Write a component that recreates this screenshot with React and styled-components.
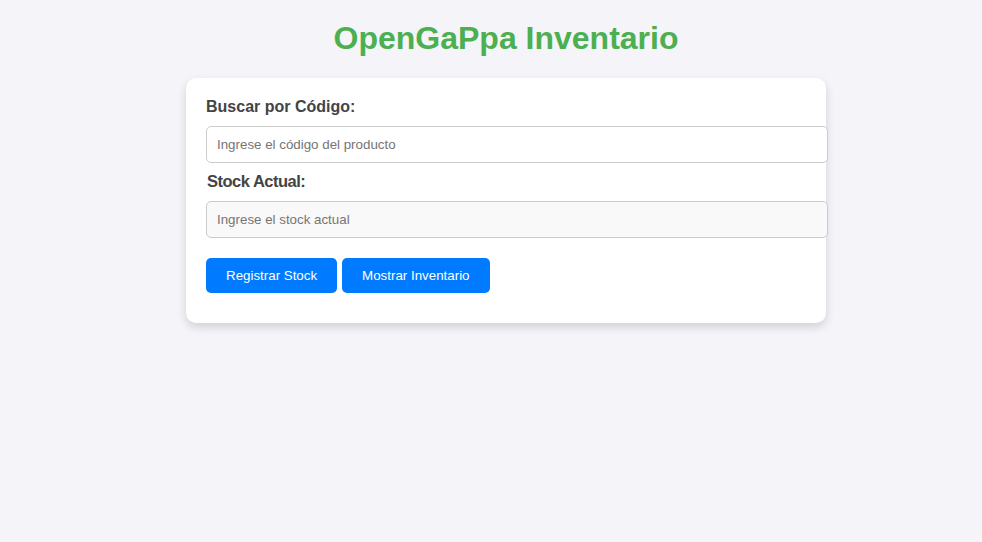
import React from "react";
import styled, { createGlobalStyle } from "styled-components";

const GlobalStyle = createGlobalStyle`
  html, body { margin: 0; }
  body {
    background: #f4f4f9;
    font-family: "Liberation Sans", Arial, sans-serif;
    padding: 20px 0 20px 30px;
    color: #333;
  }
`;

const Page = styled.main`
  display: flex;
  flex-direction: column;
  align-items: center;
`;

const Title = styled.h1`
  margin: 0 0 21px;
  font-size: 32px;
  font-weight: bold;
  color: #4caf50;
  text-align: center;
`;

const Card = styled.section`
  width: 600px;
  padding: 20px;
  background: #fff;
  border-radius: 10px;
  box-shadow: 0 4px 10px rgba(0, 0, 0, 0.15);
`;

const Label = styled.label`
  display: block;
  font-weight: bold;
  color: #444;
  font-size: ${(p) => p.$size || 16}px;
  line-height: ${(p) => p.$lh || 18}px;
  letter-spacing: ${(p) => p.$ls || 0}px;
  margin: ${(p) => p.$top || 0}px 0 10px;
  padding-left: ${(p) => p.$indent || 0}px;
`;

const Input = styled.input`
  display: block;
  width: 100%;
  box-sizing: content-box;
  padding: 10px;
  border: 1px solid #ccc;
  border-radius: 5px;
  font-family: "Liberation Sans", Arial, sans-serif;
  font-size: 13.333px;
  line-height: 15px;
  margin: 0;
  background: ${(p) => (p.$muted ? "#f9f9f9" : "#fff")};
  outline: none;
  &::placeholder { color: #757575; }
`;

const Actions = styled.div`
  display: flex;
  gap: 5px;
  margin: 20px 0 10px;
`;

const Button = styled.button`
  padding: 10px 20px;
  border: none;
  border-radius: 5px;
  background: #007bff;
  color: #fff;
  font-family: "Liberation Sans", Arial, sans-serif;
  font-size: 13.333px;
  line-height: 15px;
  cursor: pointer;
`;

export default function App() {
  return (
    <>
      <GlobalStyle />
      <Page>
        <Title>OpenGaPpa Inventario</Title>
        <Card>
          <Label htmlFor="codigo">Buscar por Código:</Label>
          <Input id="codigo" placeholder="Ingrese el código del producto" />
          <Label htmlFor="stock" $size={16.5} $lh={19} $ls={-0.5} $top={9} $indent={1}>
            Stock Actual:
          </Label>
          <Input id="stock" $muted placeholder="Ingrese el stock actual" />
          <Actions>
            <Button>Registrar Stock</Button>
            <Button>Mostrar Inventario</Button>
          </Actions>
        </Card>
      </Page>
    </>
  );
}
